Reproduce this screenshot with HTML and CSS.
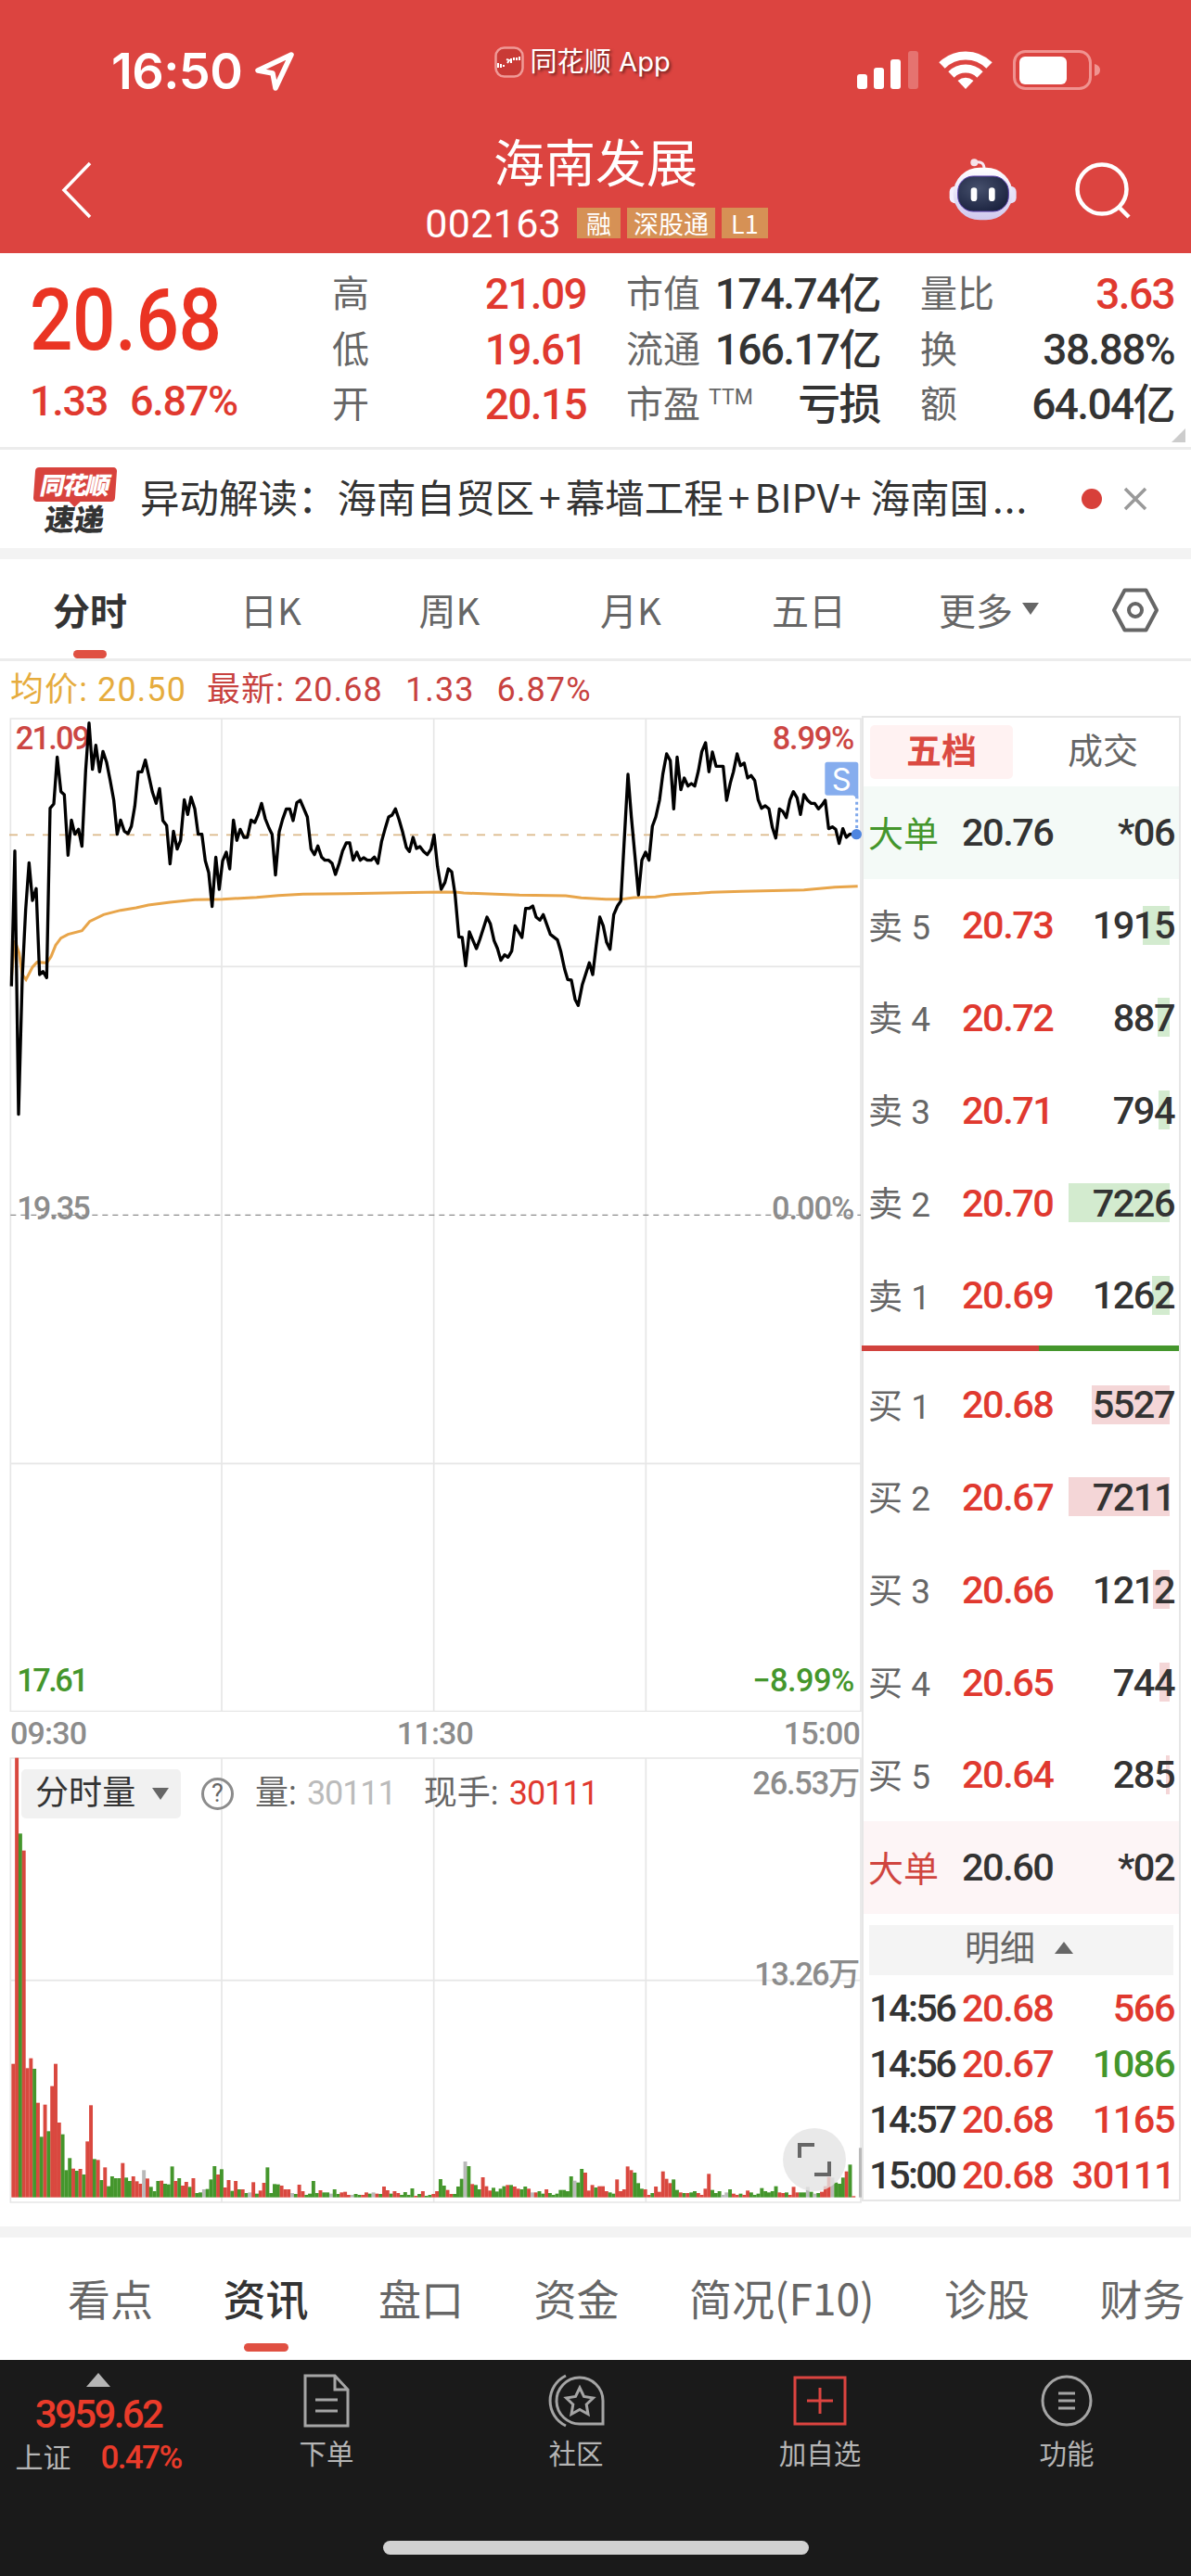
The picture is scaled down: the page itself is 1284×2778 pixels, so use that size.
FILE: index.html
```html
<!DOCTYPE html>
<html lang="zh-CN">
<head>
  <meta charset="UTF-8" />
  <title>海南发展 002163</title>
  <meta name="viewport" content="width=device-width, initial-scale=1.0" />
  <link rel="stylesheet" href="styles.css">
</head>
<body>

  <header class="top">
    <div class="status">
      <div class="clock">
        <span>16:50</span>
        <svg width="44" height="44" viewBox="0 0 44 44"><path d="M40 4 L4 21 L20 24 L23 40 Z" fill="none" stroke="#fff" stroke-width="5.5" stroke-linejoin="round"/></svg>
      </div>
      <div class="app-name">
        <svg width="32" height="34" viewBox="0 0 32 34">
          <rect x="1.5" y="1.5" width="29" height="31" rx="9" fill="#c93a36" stroke="#f09a97" stroke-width="2.5"/>
          <path d="M4 18v5M7 19v4M10 20v2M13 14l3 1-2 3M18 13v5M21 15v-3M24 12v3M27 11v4" stroke="#fff" stroke-width="2" fill="none"/>
        </svg>
        <span>同花顺 App</span>
      </div>
      <div class="signals">
        <svg width="66" height="44" viewBox="0 0 66 44" fill="#fff">
          <rect x="0" y="26" width="11" height="16" rx="3"/>
          <rect x="18" y="19" width="11" height="23" rx="3"/>
          <rect x="36" y="10" width="11" height="32" rx="3"/>
          <rect x="55" y="1" width="11" height="41" rx="3" opacity=".25"/>
        </svg>
        <svg width="58" height="44" viewBox="0 0 58 44" fill="none" stroke="#fff" stroke-width="9">
          <path d="M3.500 16.500A36 36 0 0 1 54.500 16.500"/>
          <path d="M13.500 26.500A22 22 0 0 1 44.500 26.500"/>
          <path d="M20.500 33Q29 26.500 37.500 33L29 42Z" fill="#fff" stroke="none"/>
        </svg>
        <svg width="94" height="44" viewBox="0 0 94 44">
          <rect x="1.500" y="1.500" width="82" height="40" rx="12" fill="none" stroke="#f09390" stroke-width="3"/>
          <rect x="7" y="7" width="51" height="30" rx="6" fill="#fff"/>
          <path d="M88 15q6 1.500 6 6.500t-6 6.500z" fill="#f09390"/>
        </svg>
      </div>
    </div>

    <div class="title-bar">
      <svg class="back" width="36" height="62" viewBox="0 0 36 62"><path d="M32 2L4 31L32 60" fill="none" stroke="#fff" stroke-width="3.500"/></svg>
      <div class="title">
        <h1>海南发展</h1>
        <div class="code">
          <span class="num">002163</span>
          <i class="one">融</i><i>深股通</i><i class="one">L1</i>
        </div>
      </div>
      <svg class="robot" width="74" height="68" viewBox="0 0 222 204">
        <defs>
          <linearGradient id="shell" x1="0" y1="0" x2="0" y2="1"><stop offset="0" stop-color="#fff"/><stop offset="1" stop-color="#cfc8ee"/></linearGradient>
          <radialGradient id="face" cx=".4" cy=".35" r=".7"><stop offset="0" stop-color="#46506c"/><stop offset="1" stop-color="#1b2340"/></radialGradient>
        </defs>
        <path d="M80 16q35-8 34 22" fill="none" stroke="#f6e9f4" stroke-width="9"/>
        <circle cx="82" cy="16" r="12" fill="#f6e3ea"/>
        <rect x="2" y="92" width="40" height="56" rx="18" fill="#f3f0fd"/>
        <rect x="178" y="92" width="40" height="56" rx="18" fill="#e6e1f8"/>
        <rect x="14" y="32" width="192" height="170" rx="86" fill="url(#shell)"/>
        <rect x="29" y="60" width="164" height="114" rx="50" fill="url(#face)" stroke="#5a3fae" stroke-width="3"/>
        <rect x="71" y="97" width="20" height="44" rx="10" fill="#fff"/>
        <rect x="129" y="97" width="20" height="44" rx="10" fill="#fff"/>
      </svg>
      <svg class="search" width="62" height="62" viewBox="0 0 62 62" fill="none" stroke="#fff" stroke-width="4.500"><circle cx="30" cy="30" r="26.500"/><path d="M48 49L59 60"/></svg>
    </div>
  </header>

  <section class="quote num">
    <div class="price">
      <b>20.68</b>
      <p><span>1.33</span><span>6.87%</span></p>
    </div>
    <dl>
      <div><dt>高</dt><dd class="red">21.09</dd></div>
      <div><dt>低</dt><dd class="red">19.61</dd></div>
      <div><dt>开</dt><dd class="red">20.15</dd></div>
    </dl>
    <dl>
      <div><dt>市值</dt><dd>174.74亿</dd></div>
      <div><dt>流通</dt><dd>166.17亿</dd></div>
      <div><dt>市盈<sup>TTM</sup></dt><dd>亏损</dd></div>
    </dl>
    <dl>
      <div><dt>量比</dt><dd class="red">3.63</dd></div>
      <div><dt>换</dt><dd>38.88%</dd></div>
      <div><dt>额</dt><dd>64.04亿</dd></div>
    </dl>
    <span class="corner"></span>
  </section>

  <section class="news">
    <div class="badge">
      <span class="bubble"><em>同花顺</em></span>
      <em class="word">速递</em>
    </div>
    <p>异动解读：<span>海南自贸区<u>+</u>幕墙工程<u>+</u>BIPV+<u></u>海南国<small>...</small></span></p>
    <span class="dot"></span>
    <svg width="26" height="26" viewBox="0 0 26 26"><path d="M2 2L24 24M24 2L2 24" stroke="#999" stroke-width="3.500"/></svg>
  </section>

  <nav class="periods">
    <a class="on">分时</a><a>日K</a><a>周K</a><a>月K</a><a>五日</a>
    <a class="more">更多<svg width="20" height="13" viewBox="0 0 20 13"><path d="M1 0h18L10 13z" fill="#666"/></svg></a>
    <svg class="gear" width="52" height="48" viewBox="0 0 52 48" fill="none" stroke="#666" stroke-width="4"><path d="M14.500 2.500h23L49 24L37.500 45.500h-23L3 24z" stroke-linejoin="round"/><circle cx="26" cy="24" r="7"/></svg>
  </nav>

  <main>
    <div class="charts">
      <div class="legend num">
        <span class="avg">均价: 20.50</span><span>最新: 20.68</span><span>1.33</span><span>6.87%</span>
      </div>

      <svg class="price-chart" width="929" height="1072" viewBox="0 39 2787 3216">
        <g class="grid">
          <path d="M34 42H2784V3254H34zM717 42V3254M1403 42V3254M2089 42V3254M34 844H2784M34 2452H2784"/>
        </g>
        <path d="M34 1648H2784" stroke="#8c8c8c" stroke-width="4" stroke-dasharray="18 15"/>
        <path d="M30 418H2784" stroke="#dcb98a" stroke-width="5" stroke-dasharray="27 27"/>
        <g class="axis">
          <text x="50" y="142" class="t-red" textLength="242">21.09</text>
          <text x="2764" y="142" class="t-red end" textLength="266">8.99%</text>
          <text x="55" y="1663" textLength="238">19.35</text>
          <text x="2764" y="1663" class="end" textLength="268">0.00%</text>
          <text x="55" y="3190" class="t-green" textLength="232">17.61</text>
          <text x="2764" y="3190" class="t-green end" textLength="330">−8.99%</text>
        </g>
        <polyline id="avgLine" class="avg-line"/>
        <polyline id="priceLine" class="price-line"/>
        <path d="M2771 292V400" stroke="#7ea7ea" stroke-width="9" stroke-dasharray="9 10"/>
        <path d="M2676 182h92q8 0 8 8v112l-16-12h-84q-8 0-8-8v-92q0-8 8-8z" fill="#86adee"/>
        <text x="2722" y="272" class="sell">S</text>
        <circle cx="2770" cy="416" r="17" fill="#4f86e0"/>
      </svg>

      <div class="times num"><span>09:30</span><span>11:30</span><span>15:00</span></div>

      <div class="volume">
        <svg class="volume-chart" width="929" height="482" viewBox="0 -318 2787 1446">
          <path class="grid" d="M34 -315H2784V1122H34zM717 -315V1122M1403 -315V1122M2089 -315V1122M34 404H2784"/>
          <g id="bars"></g>
          <g class="axis">
            <text x="2782" y="-197" class="end" textLength="348">26.53万</text>
            <text x="2782" y="420" class="end" textLength="342">13.26万</text>
          </g>
        </svg>
        <div class="volume-head num">
          <span class="pill">分时量<svg width="18" height="13" viewBox="0 0 18 13"><path d="M0 0h18L9 13z" fill="#666"/></svg></span>
          <span class="help">?</span>
          <span>量: <i>30111</i></span>
          <span>现手: <b>30111</b></span>
        </div>
        <div class="expand"><svg width="36" height="38" viewBox="0 0 36 38" fill="none" stroke="#666" stroke-width="4"><path d="M2 17V3H18M34 21V35H18"/></svg></div>
      </div>
    </div>

    <aside class="book num">
      <div class="book-tabs"><span class="on">五档</span><span>成交</span></div>
      <div class="row big-sell"><span>大单</span><b>20.76</b><b>*06</b></div>
      <div class="row sell5"><span>卖 5</span><b>20.73</b><b style="--bar:29px">1915</b></div>
      <div class="row sell5"><span>卖 4</span><b>20.72</b><b style="--bar:13px">887</b></div>
      <div class="row sell5"><span>卖 3</span><b>20.71</b><b style="--bar:12px">794</b></div>
      <div class="row sell5"><span>卖 2</span><b>20.70</b><b style="--bar:109px">7226</b></div>
      <div class="row sell5"><span>卖 1</span><b>20.69</b><b style="--bar:19px">1262</b></div>
      <div class="ratio"></div>
      <div class="row buy5"><span>买 1</span><b>20.68</b><b style="--bar:84px">5527</b></div>
      <div class="row buy5"><span>买 2</span><b>20.67</b><b style="--bar:109px">7211</b></div>
      <div class="row buy5"><span>买 3</span><b>20.66</b><b style="--bar:18px">1212</b></div>
      <div class="row buy5"><span>买 4</span><b>20.65</b><b style="--bar:11px">744</b></div>
      <div class="row buy5"><span>买 5</span><b>20.64</b><b style="--bar:4px">285</b></div>
      <div class="row big-buy"><span>大单</span><b>20.60</b><b>*02</b></div>
      <div class="detail">明细<svg width="20" height="13" viewBox="0 0 20 13"><path d="M0 13h20L10 0z" fill="#666"/></svg></div>
      <div class="tick"><span>14:56</span><b>20.68</b><b>566</b></div>
      <div class="tick"><span>14:56</span><b>20.67</b><b class="green">1086</b></div>
      <div class="tick"><span>14:57</span><b>20.68</b><b>1165</b></div>
      <div class="tick"><span>15:00</span><b>20.68</b><b>30111</b></div>
    </aside>
  </main>

  <nav class="sections">
    <a>看点</a><a class="on">资讯</a><a>盘口</a><a>资金</a><a>简况(F10)</a><a>诊股</a><a>财务</a>
  </nav>

  <footer>
    <div class="toolbar">
      <div class="index num">
        <svg width="26" height="15" viewBox="0 0 26 15"><path d="M0 15h26L13 0z" fill="#b5b5b5"/></svg>
        <b>3959.62</b>
        <p><span>上证</span><b>0.47%</b></p>
      </div>
      <a class="order">
        <svg width="52" height="58" viewBox="0 0 52 58"><path d="M3 2H35L49 17V56H3zM35 2V17H49M14 28H38M14 40H38"/></svg>
        下单
      </a>
      <a class="club">
        <svg width="62" height="58" viewBox="0 0 62 58"><path d="M60 54H36A25 25 0 1 1 60 29zM20 2A30 30 0 0 0 20 56"/><path d="M35 15l4.500 9.500 10 1.500-7.300 7 1.800 10.500-9-5-9 5 1.800-10.500-7.300-7 10-1.500z"/></svg>
        社区
      </a>
      <a class="add">
        <svg width="58" height="58" viewBox="0 0 58 58"><path d="M2 4H56V54H2zM29 15V43M15 29H43"/></svg>
        加自选
      </a>
      <a class="menu">
        <svg width="56" height="58" viewBox="0 0 56 58"><circle cx="28" cy="29" r="26"/><path d="M19 21H37M19 29H37M19 37H37"/></svg>
        功能
      </a>
    </div>
    <div class="home"></div>
  </footer>

  <script src="script.js"></script>
</body>
</html>
```
FILE: styles.css
```css
:root {
  --red: #e0392f;
  --head: #dc4440;
  --green: #44962c;
  --text: #333;
  --grey: #666;
  --line: #e6e6e6;
  --band: #f3f3f3;
}

* {
  box-sizing: border-box;
}

body {
  width: 1284px;
  height: 2778px;
  margin: 0;
  overflow: hidden;
  background: #fff;
  color: var(--text);
  font-family: "Noto Sans CJK SC", sans-serif;
}

h1, p, dl, dd {
  margin: 0;
}

i, em {
  font-style: normal;
}

b {
  font-weight: 500;
}

svg {
  display: block;
  flex: none;
}

.num {
  font-family: Roboto, "Noto Sans CJK SC", sans-serif;
}

.red {
  color: var(--red);
}

/* header */
.top {
  height: 273px;
  background: var(--head);
  color: #fff;
}

.status {
  display: flex;
  height: 148px;
  padding: 54px 98px 0 120px;
}

.clock {
  display: flex;
  width: 414px;
  height: 46px;
  align-items: center;
  gap: 13px;
  font: 600 54px/46px Inter, sans-serif;
  letter-spacing: -0.6px;
}

.app-name {
  display: flex;
  width: 391px;
  height: 26px;
  align-items: center;
  gap: 6px;
  font: 29px/26px Inter, "Noto Sans CJK SC", sans-serif;
  letter-spacing: 0.1px;
  white-space: nowrap;
  text-shadow: 2px 2px 3px rgba(0,0,0,0.5);
}

.signals {
  display: flex;
  gap: 22px;
}

.title-bar {
  display: flex;
  height: 125px;
}

.back {
  margin: 26px 0 0 65px;
}

.title {
  display: flex;
  flex-direction: column;
  align-items: center;
  width: 486px;
  margin-left: 298px;
}

.title h1 {
  width: 484px;
  font-weight: 400;
  font-size: 55px;
  line-height: 49px;
  text-align: center;
}

.code {
  display: flex;
  align-items: center;
  gap: 7px;
  height: 33px;
  margin-top: 27px;
  padding-left: 2px;
}

.code .num {
  margin-right: 10px;
  font-size: 43px;
  letter-spacing: 0.3px;
}

.code i {
  padding: 0 7px;
  background: #d69155;
  font-size: 27px;
  line-height: 33px;
}

.code .one {
  padding: 0 10px;
}

.robot {
  margin: 22px 0 0 138px;
}

.search {
  margin: 26px 0 0 61px;
}

/* quote */
.quote {
  position: relative;
  display: flex;
  height: 212px;
  padding-top: 14px;
  border-bottom: 3px solid #ececec;
  font-size: 46px;
  letter-spacing: -1.6px;
}

.price {
  width: 358px;
  padding: 24px 0 0 32px;
  color: var(--red);
}

.price b {
  display: block;
  font-size: 93px;
  line-height: 70px;
  letter-spacing: -0.5px;
  color: #ea3423;
  transform: scaleX(0.88);
  transform-origin: left;
}

.price p {
  display: flex;
  gap: 24px;
  margin-top: 27px;
  line-height: 50px;
  font-weight: 500;
  font-size: 45px;
  letter-spacing: -1.3px;
}

.quote dl {
  width: 274px;
  margin-right: 43px;
}

.quote dl:last-of-type {
  margin-right: 0;
}

.quote dl div {
  display: flex;
  justify-content: space-between;
  height: 59.500px;
  line-height: 61px;
  white-space: nowrap;
}

.quote dt {
  color: var(--grey);
  font-size: 40px;
  letter-spacing: 0;
}

.quote dd {
  font-weight: 500;
}

.quote sup {
  margin-left: 9px;
  font-size: 23px;
  line-height: 0;
}

.corner {
  position: absolute;
  right: 6px;
  bottom: 5px;
  border-left: 15px solid transparent;
  border-bottom: 15px solid #ccc;
}

/* news line */
.news {
  display: flex;
  align-items: center;
  height: 106px;
  padding-left: 37px;
}

.badge {
  width: 88px;
  margin-right: 26px;
}

.badge em {
  display: block;
  transform: skewX(-8deg);
  font-weight: 900;
  text-align: center;
}

.bubble {
  position: relative;
  display: block;
  height: 37px;
  background: #d8433d;
  border-radius: 4px;
  transform: skewX(-4deg);
  color: #fff;
  font-size: 26px;
  line-height: 36px;
  letter-spacing: -1.5px;
}

.bubble::after {
  content: "";
  position: absolute;
  left: 38px;
  top: 36px;
  border: 7px solid transparent;
  border-top: 7px solid #d8433d;
}

.badge .word {
  margin-top: 3px;
  font-size: 32px;
  line-height: 28px;
}

.news p {
  width: 1015px;
  padding-bottom: 6px;
  font-size: 42.500px;
  line-height: 60px;
  white-space: nowrap;
}

.news u {
  margin: 0 5px;
  text-decoration: none;
}

.news small {
  margin-left: 4px;
  font-size: 42px;
  letter-spacing: 1px;
}

.dot {
  width: 22px;
  height: 22px;
  margin-right: 23px;
  border-radius: 50%;
  background: #d8403a;
}

/* period tabs */
.periods {
  display: flex;
  height: 122px;
  border-top: 12px solid var(--band);
  border-bottom: 3px solid #ececec;
  color: var(--grey);
  font-size: 40px;
  line-height: 108px;
}

.periods a {
  position: relative;
  width: 194px;
  text-align: center;
}

.periods .on {
  color: var(--text);
  font-weight: 700;
}

.periods .on::after,
.sections .on::after {
  content: "";
  position: absolute;
  left: 50%;
  bottom: 0;
  width: 36px;
  height: 9px;
  margin-left: -18px;
  border-radius: 5px;
  background: #e05042;
}

.periods a:nth-child(2) { width: 196px; }
.periods a:nth-child(3) { width: 189px; }
.periods a:nth-child(4) { width: 202px; }
.periods a:nth-child(5) { width: 182px; }

.periods .more {
  display: flex;
  align-items: center;
  gap: 9px;
  width: 186px;
  margin-left: 49px;
}

.periods .gear {
  margin-top: 31px;
}

/* charts */
main {
  display: flex;
  height: 1688px;
}

.charts {
  width: 929px;
}

.legend {
  display: flex;
  gap: 24px;
  height: 61px;
  padding-left: 11px;
  color: #c8423f;
  font-size: 36px;
  line-height: 62px;
  letter-spacing: 1.1px;
}

.legend .avg {
  margin-right: -2px;
  color: #e6ac3d;
}

.grid {
  fill: none;
  stroke: var(--line);
  stroke-width: 5px;
}

.axis {
  fill: #8c8c8c;
  font: 500 103px Roboto, "Noto Sans CJK SC", sans-serif;
}

.t-red { fill: #cc4643; }
.t-green { fill: var(--green); }
.end { text-anchor: end; }

.avg-line {
  fill: none;
  stroke: #e8a54a;
  stroke-width: 9px;
}

.price-line {
  fill: none;
  stroke: #000;
  stroke-width: 10px;
  stroke-linejoin: round;
}

.sell {
  fill: #fff;
  font: 98px Inter, sans-serif;
  text-anchor: middle;
}

.times {
  display: grid;
  grid-template-columns: 1fr 1fr 1fr;
  height: 49px;
  padding: 0 2px 0 11px;
  color: #8c8c8c;
  font-weight: 500;
  font-size: 34px;
  line-height: 46px;
  letter-spacing: -0.8px;
}

.times span:nth-child(2) { text-align: center; }
.times span:nth-child(3) { text-align: right; }

.volume {
  position: relative;
}

.volume-head {
  position: absolute;
  left: 23px;
  top: 13px;
  display: flex;
  align-items: center;
  height: 53px;
  font-size: 36px;
  line-height: 53px;
  letter-spacing: 0.1px;
  color: var(--grey);
  white-space: nowrap;
}

.pill {
  display: flex;
  align-items: center;
  justify-content: space-between;
  width: 172px;
  padding: 0 13px 0 15px;
  border-radius: 5px;
  background: #f1f1f1;
  color: var(--text);
}

.help {
  width: 35px;
  height: 35px;
  margin: 0 23px 0 22px;
  border: 3px solid #8c8c8c;
  border-radius: 50%;
  font-size: 27px;
  line-height: 29px;
  text-align: center;
}

.volume-head i {
  margin: 0 30px 0 2px;
  color: #bbb;
  letter-spacing: -1.1px;
}

.volume-head b {
  margin-left: 2px;
  color: var(--red);
  font-weight: 400;
  letter-spacing: -1px;
}

.expand {
  position: absolute;
  left: 844px;
  top: 400px;
  width: 68px;
  height: 68px;
  padding: 15px 16px;
  border-radius: 50%;
  background: rgba(228,228,228,0.8);
}

/* order book */
.book {
  width: 344px;
  height: 1602px;
  margin-top: 59px;
  border: 2px solid var(--line);
  letter-spacing: -1.5px;
}

.book-tabs {
  display: flex;
  height: 74px;
  padding: 8px 0 8px 7px;
  color: var(--grey);
  font-size: 38px;
  line-height: 56px;
  text-align: center;
  letter-spacing: 0;
}

.book-tabs span {
  width: 154px;
  border-radius: 5px;
}

.book-tabs span + span {
  margin-left: 20px;
}

.book-tabs .on {
  background: #fff2f2;
  color: #db4a42;
  font-weight: 700;
}

.row {
  display: grid;
  grid-template-columns: 101px 99px 1fr;
  align-items: center;
  height: 99.800px;
  padding: 0 5px 0 5px;
  font-size: 41.500px;
}

.row span {
  padding-bottom: 2px;
  color: var(--grey);
  font-size: 37px;
  letter-spacing: 0;
}

.row b:nth-child(2) {
  color: var(--red);
}

.row b:nth-child(3) {
  background: linear-gradient(#d3ebcf, #d3ebcf) no-repeat right 5px center / var(--bar, 0) 42px;
  text-align: right;
}

.row.buy5 b:nth-child(3) {
  background-image: linear-gradient(#f4d6d7, #f4d6d7);
}

.row.big-sell { background: #f4faf7; }
.row.big-buy { background: #fdf5f6; }

.big-sell b:nth-child(2),
.big-buy b:nth-child(2) {
  color: var(--text);
}

.big-sell span { color: var(--green); font-size: 38px; }
.big-buy span { color: #d0453f; font-size: 38px; }

.ratio {
  height: 6px;
  margin: 4px 0 8px -2px;
  background: linear-gradient(90deg, #d1423d 191px, var(--green) 191px);
}

.detail {
  display: flex;
  align-items: center;
  gap: 21px;
  height: 54px;
  margin: 12px 6px 5px 6px;
  padding: 0 0 4px 103px;
  background: #f4f4f4;
  color: var(--grey);
  font-size: 38px;
  line-height: 50px;
  letter-spacing: 0;
}

.tick {
  display: grid;
  grid-template-columns: 100px 99px 1fr;
  height: 60px;
  padding: 0 5px 0 6px;
  font-size: 41.500px;
  line-height: 61px;
}

.tick span {
  font-weight: 500;
  letter-spacing: -2.6px;
}

.tick b {
  color: var(--red);
}

.tick b:nth-child(3) {
  text-align: right;
}

.tick .green {
  color: var(--green);
}

/* section tabs */
.sections {
  display: flex;
  gap: 75.500px;
  height: 144px;
  padding-left: 73px;
  border-top: 12px solid var(--band);
  color: var(--grey);
  font-size: 46px;
  line-height: 128px;
  white-space: nowrap;
}

.sections a {
  position: relative;
}

.sections .on {
  color: var(--text);
  font-weight: 500;
}

.sections .on::after {
  bottom: 9px;
  width: 48px;
  margin-left: -24px;
}

/* bottom bar */
footer {
  height: 234px;
  background: #1a1a1a;
  color: #b5b5b5;
}

.toolbar {
  display: flex;
  height: 195px;
}

.index {
  display: flex;
  flex-direction: column;
  align-items: center;
  width: 212px;
  padding-top: 14px;
}

.index b {
  color: #ea3b2a;
}

.index > b {
  margin-top: 8px;
  font-size: 42px;
  line-height: 44px;
  letter-spacing: -2.6px;
}

.index p {
  display: flex;
  gap: 32px;
  margin-top: 3px;
  font-size: 30px;
  line-height: 44px;
}

.index p b {
  font-size: 35px;
  letter-spacing: -1.6px;
}

.toolbar a {
  display: flex;
  flex-direction: column;
  align-items: center;
  padding-top: 15px;
  font-size: 29.500px;
  line-height: 52px;
}

.toolbar a svg {
  fill: none;
  stroke: #a5a5a5;
  stroke-width: 3px;
}

.toolbar .add svg {
  stroke: #dc4440;
}

.order { width: 280px; }
.club { width: 258px; }
.add { width: 268px; }
.menu { width: 264px; }

.home {
  width: 459px;
  height: 15px;
  margin: 0 auto;
  border-radius: 8px;
  background: #d2d2d2;
}
```
FILE: script.js
```js
// minute price line, x,y in chart units (3 per px)
const price = `37,908 48,470 60,1322 72,880 83,660 94,508 105,630 117,592 128,870 139,860 151,880 162,332 174,318 185,166
197,278 208,288 220,484 231,370 242,416 254,400 265,455 277,210 288,56 299,206 310,128 322,214 333,148 345,184 356,240
368,306 379,416 390,370 402,406 414,414 425,390 436,325 447,214 459,214 470,176 482,230 493,280 505,316 516,268 527,372
539,388 550,512 561,406 573,464 584,436 596,304 607,352 618,296 630,334 641,416 653,416 664,502 675,540 686,650 698,490
709,594 720,502 732,474 743,528 755,370 766,436 777,400 789,426 800,426 812,370 824,378 835,352 846,316 858,366 870,396
880,416 891,548 903,408 914,368 926,334 937,334 948,372 960,314 971,306 983,334 994,360 1006,464 1017,482 1028,454
1040,490 1051,500 1063,500 1074,510 1085,546 1097,510 1108,470 1120,444 1131,444 1142,500 1154,474 1165,500 1176,492
1188,500 1200,500 1211,490 1222,510 1234,440 1245,400 1257,360 1268,354 1279,334 1291,370 1302,408 1314,458 1324,472
1336,426 1347,462 1358,456 1370,472 1382,482 1394,464 1404,418 1415,520 1427,594 1439,572 1450,528 1461,538 1472,612
1484,748 1495,750 1506,842 1518,732 1541,786 1552,756 1575,684 1586,706 1598,760 1609,786 1620,824 1632,806 1643,814
1655,794 1666,712 1688,750 1700,656 1712,656 1723,648 1734,684 1746,694 1757,676 1780,740 1803,758 1814,796 1826,852
1836,886 1848,888 1860,950 1870,970 1883,904 1906,832 1917,870 1928,778 1940,684 1951,712 1962,766 1973,788 1985,676
1997,648 2008,632 2031,222 2042,360 2053,480 2065,612 2076,500 2088,474 2099,500 2110,390 2121,360 2133,306 2144,220
2156,156 2168,178 2179,334 2190,166 2202,272 2213,234 2225,260 2236,252 2247,260 2259,210 2270,148 2282,120 2293,214
2304,150 2316,196 2339,196 2350,306 2362,250 2372,214 2384,156 2395,194 2407,186 2418,234 2429,226 2441,242 2452,304
2463,332 2475,324 2487,334 2498,394 2509,428 2521,334 2532,342 2543,362 2555,304 2566,278 2578,298 2589,352 2600,288
2612,306 2623,316 2635,316 2647,334 2658,322 2669,306 2680,398 2692,392 2703,400 2714,446 2726,398 2737,426 2748,416 2770,416`;

const average = `37,880 48,760 62,800 72,870 84,886 105,846 120,830 151,832 165,812 180,775 197,752 220,740 265,728 290,698
335,676 390,662 440,654 480,645 550,636 630,628 720,626 830,620 900,614 980,610 1120,608 1380,604 1440,603 1480,604
1500,606 1680,613 1830,615 1880,622 1960,626 2010,626 2050,621 2120,619 2170,611 2260,607 2300,604 2400,601 2600,596
2700,587 2774,584`;

// one bar per minute: r up, g down, n flat
const volume = `r432 r1422 g1177 r1122 r418 r450 g416 r306 g196 r300 g214 r360 r432 r242 g204 g88 g127 r93 g86 r92 g74 r181
r298 g124 r121 g56 r97 g36 g68 g62 g62 r111 g64 g53 r68 r52 r44 n88 r61 g34 g20 g53 r54 g44 g42 g100 r53 g62 r38 r50 g34
r62 g14 g16 n26 g27 g58 g101 r74 g91 r32 r56 g21 r53 g26 r26 g14 n16 r49 g12 r22 r47 g97 g14 g43 g42 r38 r26 r26 n14 g11
r41 r20 g8 g12 g53 g14 r23 g16 g16 n12 g26 g11 r16 r18 r8 n8 g11 g8 r8 r16 g12 n16 r12 g11 r35 r23 g12 r20 r14 g8 g17 g8
g29 r5 g11 r20 g5 g8 r11 r20 g59 g38 r24 r11 g11 g35 g60 n116 g101 r43 g40 g26 r65 r36 r22 g31 g19 g28 g36 r40 g40 r35
r28 g26 g35 r28 n16 r16 g20 g12 r26 g14 g8 g12 g24 g24 g20 g68 n54 g48 g92 r80 r22 r40 g32 r36 r36 r20 g16 g12 r58 r20
r26 r100 r88 g80 g46 g28 r26 r8 g14 r35 r18 r84 r60 r46 g58 g24 r16 g14 r14 g16 g20 r14 r8 r28 r76 g24 g14 g20 n8 n16 g26
r12 r8 g12 r8 r22 g16 g8 g12 g30 g20 g16 g20 g36 r16 r14 g16 r8 r34 r16 g16 g16 n34 g18 n12 g14 r18 r36 r66 n64 g48 g44
g64 r84 g106 r4 r0 n160`;

const colors = { r: '#d9483f', g: '#44962c', n: '#b9b9b9' };
const base = 1106;
const step = 11.42;

document.getElementById('priceLine').setAttribute('points', price);
document.getElementById('avgLine').setAttribute('points', average);

document.getElementById('bars').innerHTML = volume.split(/\s+/).map((v, i) => {
  const h = Number(v.slice(1));
  return `<rect x="${37 + i * step}" y="${base - h}" width="11.8" height="${h}" fill="${colors[v[0]]}"/>`;
}).join('');
```
